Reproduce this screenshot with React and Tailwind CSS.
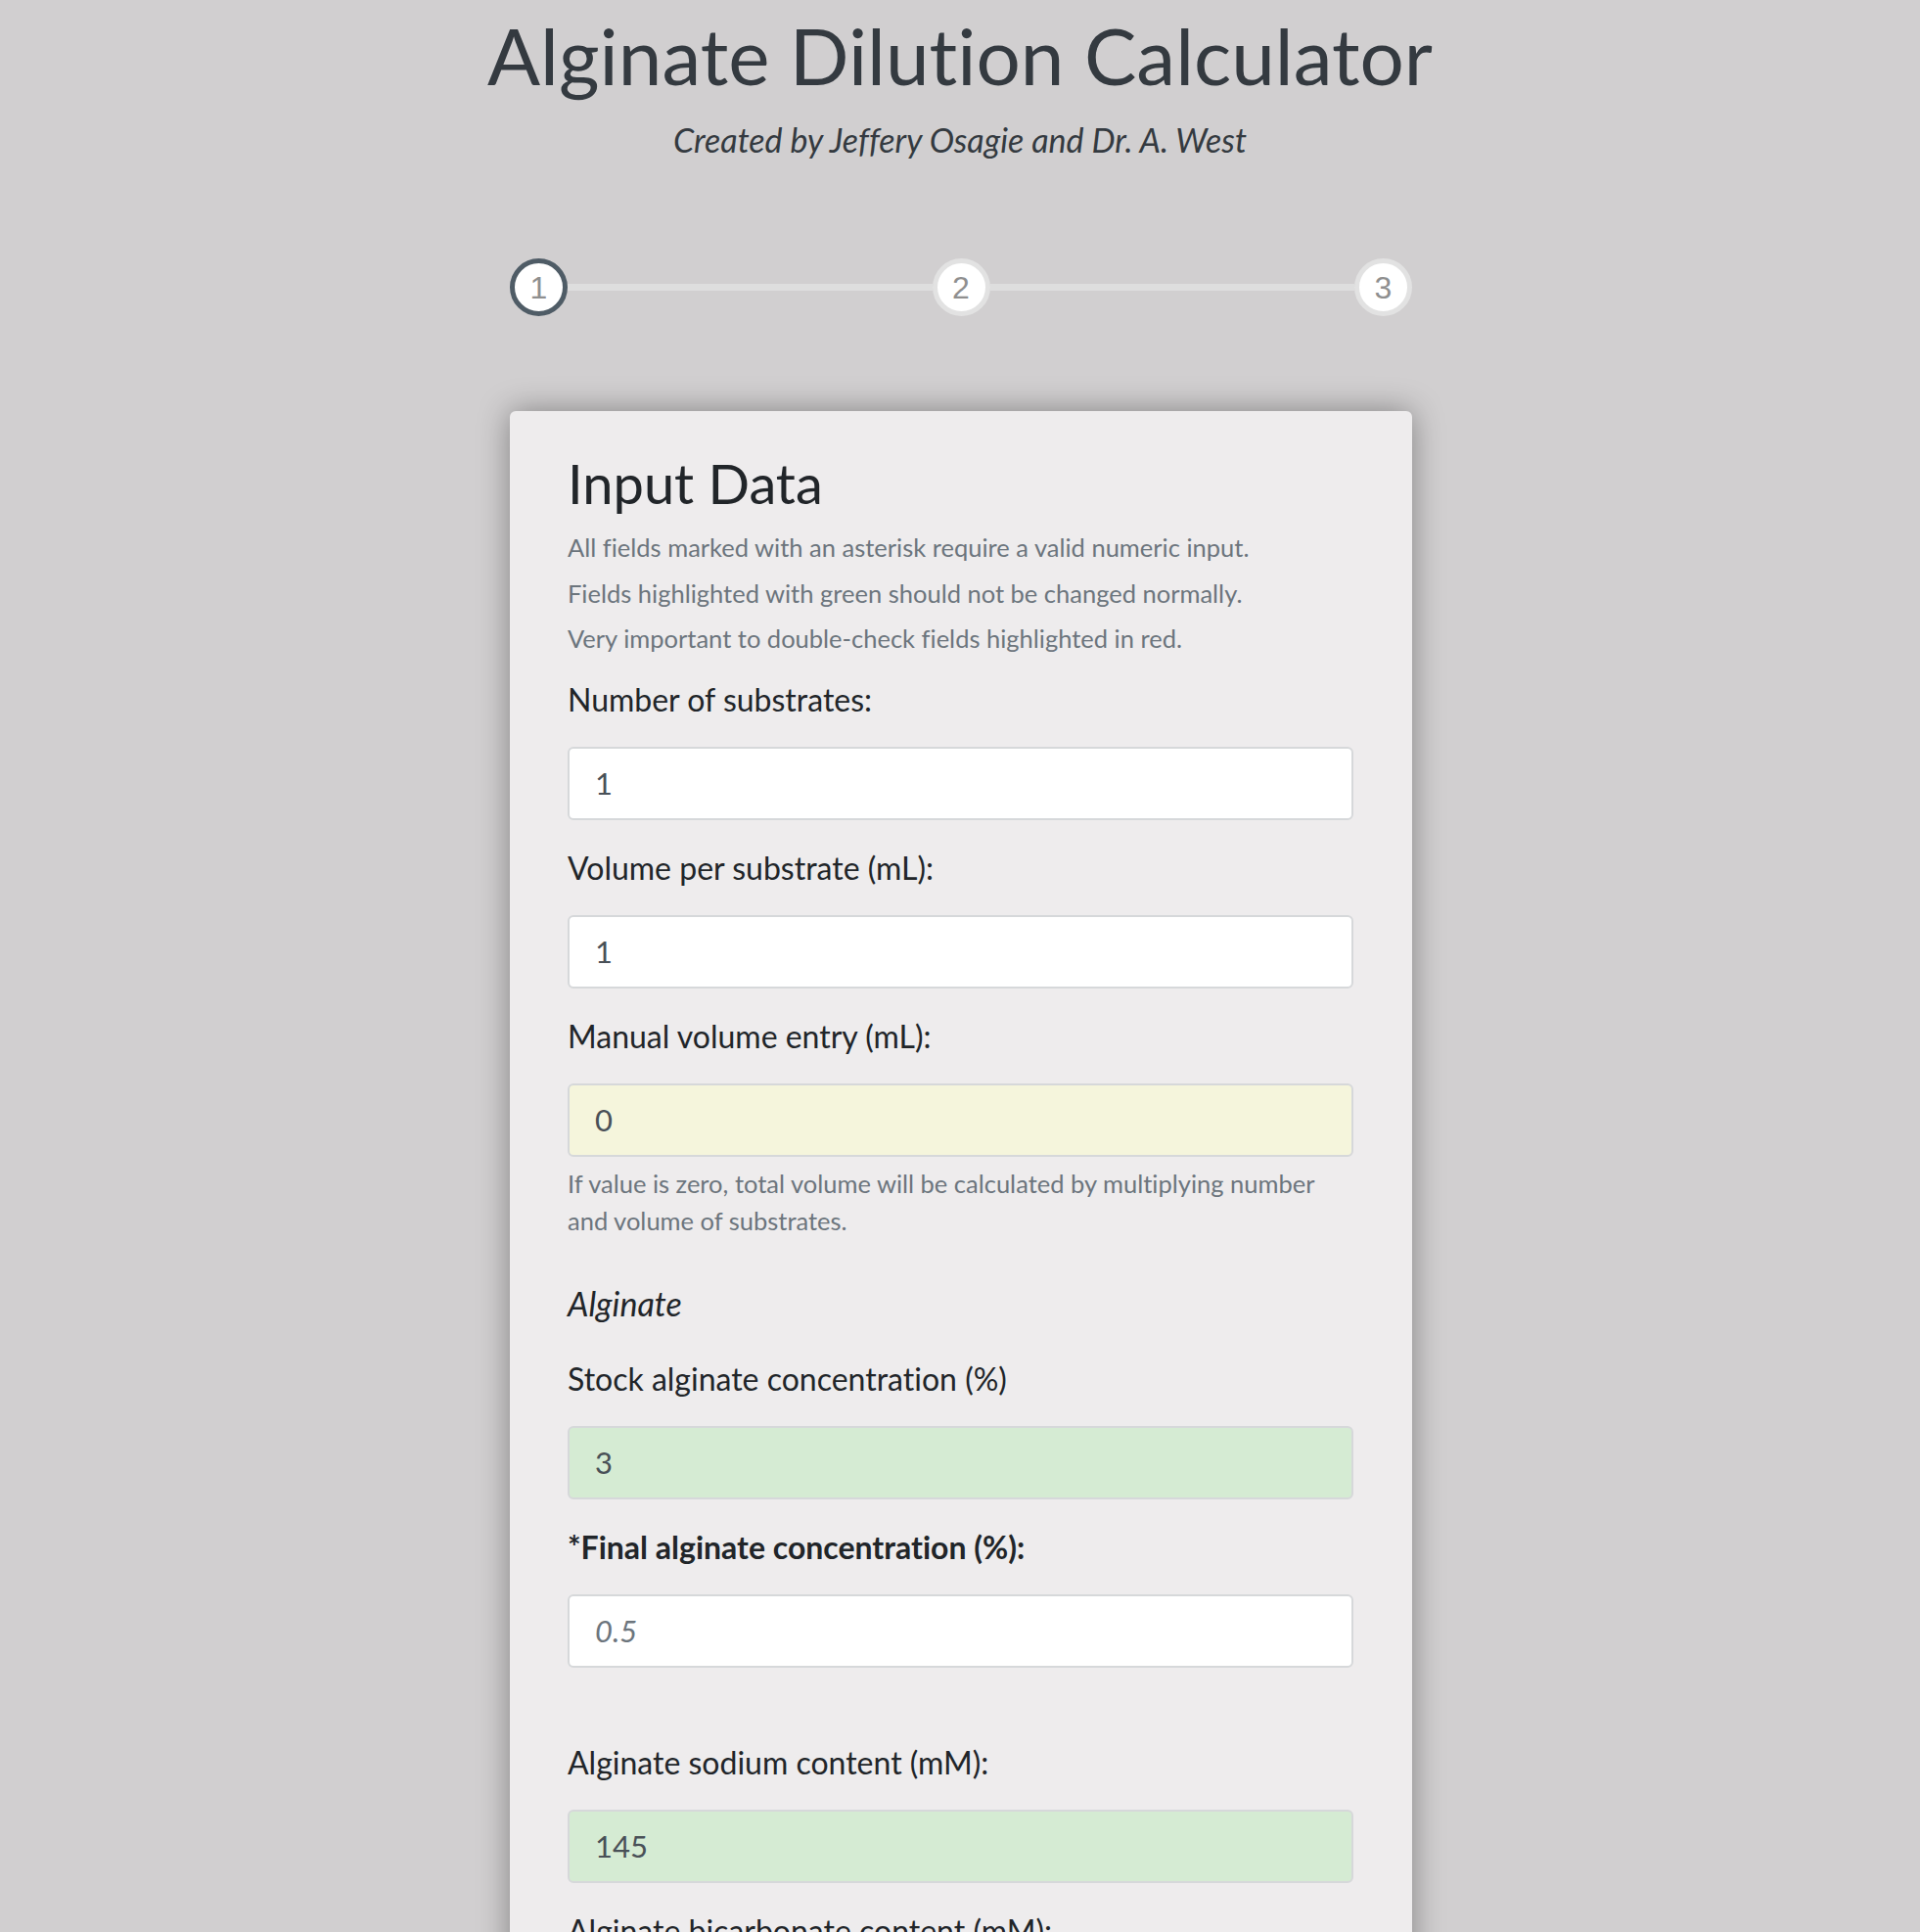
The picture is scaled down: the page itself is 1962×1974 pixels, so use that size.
const fields = [
  { label: 'Number of substrates:', value: '1', tone: 'white' },
  { label: 'Volume per substrate (mL):', value: '1', tone: 'white' },
  {
    label: 'Manual volume entry (mL):',
    value: '0',
    tone: 'yellow',
    help: 'If value is zero, total volume will be calculated by multiplying number and volume of substrates.',
  },
];

const alginateFields = [
  { label: 'Stock alginate concentration (%)', value: '3', tone: 'green' },
  { label: '*Final alginate concentration (%):', placeholder: '0.5', tone: 'white', bold: true },
  { label: 'Alginate sodium content (mM):', value: '145', tone: 'green', gapTop: true },
  { label: 'Alginate bicarbonate content (mM):', value: '0', tone: 'green' },
];

const toneClass = {
  white: 'bg-white',
  yellow: 'bg-[#f5f5dc]',
  green: 'bg-[#d5ebd3]',
};

function Field({ label, value, placeholder, tone, bold, help, gapTop }) {
  return (
    <div className={`flex flex-col ${gapTop ? 'mt-[76px]' : 'mt-[28px]'} first:mt-0`}>
      <label
        className={`text-[32px] leading-[42px] text-[#212529] ${bold ? 'font-bold' : ''}`}
      >
        {label}
      </label>
      <input
        readOnly
        defaultValue={value}
        placeholder={placeholder}
        className={`mt-[27px] h-[75px] w-full rounded-[6px] border-2 border-[#d6d8da] px-[26px] text-[31px] text-[#495057] outline-none placeholder:italic placeholder:text-[#6c757d] ${toneClass[tone]}`}
      />
      {help && (
        <p className="mt-[8px] text-[25.5px] leading-[38px] text-[#6c757d]">{help}</p>
      )}
    </div>
  );
}

function Step({ n, active }) {
  return (
    <div
      className={`z-10 flex h-[59px] w-[59px] shrink-0 items-center justify-center rounded-full border-[5px] bg-white font-['Liberation_Sans',Arial,sans-serif] text-[32px] text-[#8f8f8f] ${
        active ? 'border-[#4f5c66]' : 'border-[#e2e2e2]'
      }`}
    >
      {n}
    </div>
  );
}

export default function App() {
  return (
    <div className="h-[1974px] overflow-hidden bg-[#d1cfd0] font-['Lato','Noto_Sans',sans-serif] [font-variant-ligatures:none]">
      <header className="pt-[8px] text-center">
        <h1 className="text-[80px] leading-[1.2] font-normal text-[#343a40]">
          Alginate Dilution Calculator
        </h1>
        <p className="mt-[16px] text-[34px] leading-[45px] italic text-[#343a40]">
          Created by Jeffery Osagie and Dr. A. West
        </p>
      </header>

      <div className="mx-auto mt-[99px] flex w-[922px] translate-x-[1px] items-center">
        <Step n="1" active />
        <div className="h-[7px] flex-1 bg-[#dedede]" />
        <Step n="2" />
        <div className="h-[7px] flex-1 bg-[#dedede]" />
        <Step n="3" />
      </div>

      <main className="mx-auto mt-[97px] w-[922px] translate-x-[1px] rounded-[6px] bg-[#eeeced] pt-[40px] pr-[60px] pb-[60px] pl-[59px] shadow-[0_0_32px_rgba(0,0,0,0.38)]">
        <h2 className="text-[56px] leading-[1.2] text-[#212529]">Input Data</h2>
        <div className="mt-[9px] text-[25.5px] leading-[46.5px] text-[#6c757d]">
          <p>All fields marked with an asterisk require a valid numeric input.</p>
          <p>Fields highlighted with green should not be changed normally.</p>
          <p>Very important to double-check fields highlighted in red.</p>
        </div>

        <div className="mt-[18px] flex flex-col">
          {fields.map((f) => (
            <Field key={f.label} {...f} />
          ))}
        </div>

        <h3 className="mt-[45px] text-[34px] leading-[42px] italic text-[#212529]">Alginate</h3>

        <div className="mt-[35px] flex flex-col">
          {alginateFields.map((f) => (
            <Field key={f.label} {...f} />
          ))}
        </div>
      </main>
    </div>
  );
}
